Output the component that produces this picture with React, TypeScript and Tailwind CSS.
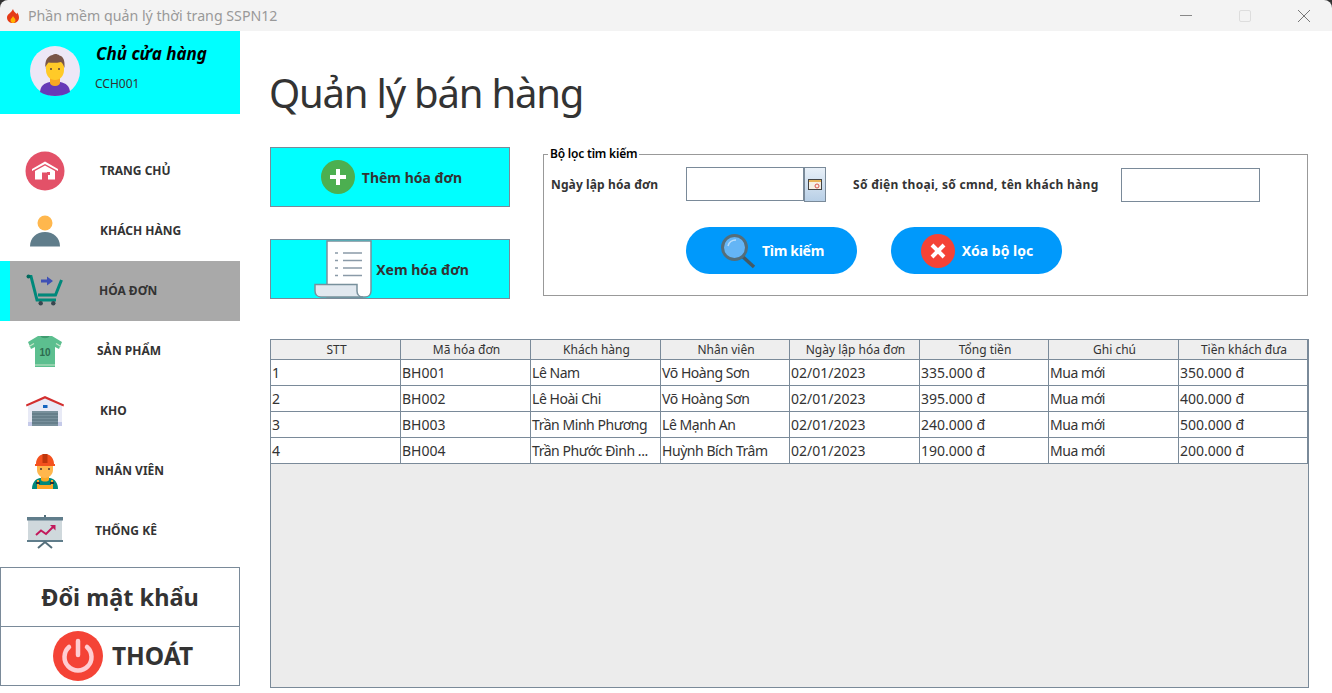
import type { ReactNode } from "react";

const FONT = "font-['Noto_Sans','DejaVu_Sans',sans-serif]";
const TABLE_COLS = "grid-cols-[130px_130px_130px_129px_130px_129px_130px_129px]";

function FlameIcon() {
  return (
    <svg width="14" height="16" viewBox="0 0 14 16">
      <path d="M7 1c.5 2.500 2 3 3.500 5 .5-.5.6-1 .6-1.500C12.500 6 13 7.700 13 9.500 13 13 10.500 15 7 15s-6-2-6-5.500C1 6 5.500 5 7 1z" fill="#e53b17" />
      <path d="M7 8c.5 1.500 2.500 2.200 2.500 4.200C9.500 13.800 8.400 15 7 15s-2.500-1.200-2.500-2.800C4.500 10.500 6.500 9.800 7 8z" fill="#ffb300" />
    </svg>
  );
}

function AvatarIcon() {
  return (
    <svg width="50" height="50" viewBox="0 0 50 50" className="mb-[3px]">
      <circle cx="25" cy="25" r="25" fill="#ede7f6" />
      <path d="M10 46c.5-6 4-9 10-10h10c6 1 9.500 4 10 10-4 2.500-9.500 4-15 4s-11-1.500-15-4z" fill="#673ab7" />
      <path d="M20 31h10v6c0 1.500-2 3-5 3s-5-1.500-5-3z" fill="#f9a825" />
      <path d="M16 17c0-5 4-7 9-7s9 3 9 8v6c0 6-4 10-9 10s-9-4-9-10z" fill="#ffca28" />
      <path d="M15.500 22c-1-7 2-12 7-13 2-1.500 5-1 7 .5 4 1 5.500 5 5 12.500-1-3-2-5-3.500-6-4 1-9 1-12.500.500-1.500 1.500-2.500 3-3.500 6z" fill="#795548" />
      <circle cx="21" cy="23" r="1" fill="#5d4037" />
      <circle cx="29" cy="23" r="1" fill="#5d4037" />
    </svg>
  );
}

function HomeIcon() {
  return (
    <svg width="40" height="40" viewBox="0 0 40 40">
      <circle cx="20" cy="20" r="19.500" fill="#e35168" />
      <path d="M7 18 20 10.500 33 18v2L20 13 7 20z" fill="#fff" />
      <path d="M10 20 20 14.500 30 20v8.500H23v-7h-6v7h-7z" fill="#fff" />
      <rect x="22" y="21" width="3" height="3" fill="#e35168" />
    </svg>
  );
}

function CustomerIcon() {
  return (
    <svg width="40" height="40" viewBox="0 0 40 40">
      <circle cx="20" cy="12" r="7.500" fill="#ffb74d" />
      <path d="M5 35.500c0-9 6.500-14.500 15-14.500s15 5.500 15 14.500z" fill="#607d8b" />
    </svg>
  );
}

function CartIcon() {
  return (
    <svg width="40" height="40" viewBox="0 0 40 40">
      <path d="M13 22h18l-1 4H14z" fill="#9e9e9e" />
      <path d="M3 5.500h3l6 23.500h19" fill="none" stroke="#00897b" strokeWidth="3" />
      <path d="M36.500 9 30.500 24H13" fill="none" stroke="#00897b" strokeWidth="3" />
      <circle cx="3.500" cy="5.500" r="2" fill="#00695c" />
      <circle cx="15.700" cy="32.300" r="2.200" fill="#37474f" />
      <circle cx="28.300" cy="32.300" r="2.200" fill="#37474f" />
      <path d="M16 8.500h6V5.500l6 4.500-6 4.500v-3h-6z" fill="#3f51b5" />
    </svg>
  );
}

function ShirtIcon() {
  return (
    <svg width="40" height="40" viewBox="0 0 40 40">
      <path d="M13 5h14l10 6-3 7-4-2v20H10V16l-4 2-3-7z" fill="#5cbf8f" />
      <path d="M15.500 5c1 3 8 3 9 0z" fill="#3f9c70" />
      <path d="M4 15.500 9 12.500M36 15.500 31 12.500" stroke="#c8e6c9" strokeWidth="1.200" />
      <rect x="10" y="33.500" width="20" height="1" fill="#c8e6c9" />
      <text x="20" y="24.500" textAnchor="middle" fontSize="10" fontWeight="700" fill="#2e6b4f" fontFamily="Liberation Sans, sans-serif">10</text>
    </svg>
  );
}

function WarehouseIcon() {
  return (
    <svg width="40" height="40" viewBox="0 0 40 40">
      <path d="M3 13 20 6l17 7v22H3z" fill="#e8eaf6" />
      <rect x="3" y="31" width="34" height="4" fill="#c5cae9" />
      <path d="M1 13.500 20 5l19 8.500-.5 2L20 7.500 1.500 15.500z" fill="#d32f2f" />
      <rect x="18" y="14" width="4.500" height="3" fill="#1565c0" />
      <rect x="7" y="20" width="26" height="15" fill="#78909c" />
      <path d="M7 23h26M7 26h26M7 29h26M7 32h26" stroke="#546e7a" strokeWidth="1" />
    </svg>
  );
}

function WorkerIcon() {
  return (
    <svg width="40" height="40" viewBox="0 0 40 40">
      <path d="M7 38c0-6 3-10 8-11h10c5 1 8 5 8 11z" fill="#00897b" />
      <path d="M16 24h8v5c-1 2-7 2-8 0z" fill="#f9a825" />
      <rect x="12" y="34" width="16" height="4" fill="#ffa726" />
      <path d="M13 29v5M27 29v5" stroke="#ffa726" strokeWidth="2" />
      <rect x="11" y="31" width="4" height="2" fill="#263238" />
      <rect x="25" y="31" width="4" height="2" fill="#263238" />
      <path d="M12 14h16v5c0 4-3.500 8-8 8s-8-4-8-8z" fill="#ffb74d" />
      <path d="M11 13c0-6 4-10 9-10s9 4 9 10h1v2H10v-2z" fill="#f4511e" />
      <rect x="17.500" y="3" width="5" height="9" fill="#bf360c" />
      <circle cx="16" cy="18" r="1" fill="#4e342e" />
      <circle cx="24" cy="18" r="1" fill="#4e342e" />
    </svg>
  );
}

function ChartIcon() {
  return (
    <svg width="40" height="40" viewBox="0 0 40 40">
      <rect x="19" y="4" width="2" height="3" fill="#546e7a" />
      <rect x="3" y="8" width="34" height="21" fill="#cfd8dc" />
      <rect x="2" y="6" width="36" height="3.500" fill="#607d8b" />
      <rect x="2" y="29" width="36" height="2" fill="#607d8b" />
      <path d="M13 37 20 31l7 6" fill="none" stroke="#546e7a" strokeWidth="2" />
      <path d="M11 24 16 19.500 21 23 29 15" fill="none" stroke="#c2185b" strokeWidth="2" />
      <path d="M25 14H30.500V19.500z" fill="#c2185b" />
    </svg>
  );
}

function PowerIcon() {
  return (
    <svg width="50" height="50" viewBox="0 0 50 50">
      <circle cx="25" cy="25" r="25" fill="#f44336" />
      <path d="M16 16a13.500 13.500 0 1 0 18 0" fill="none" stroke="#ffcdd2" strokeWidth="4.500" strokeLinecap="round" />
      <path d="M25 10v14" stroke="#ffcdd2" strokeWidth="4.500" strokeLinecap="round" />
    </svg>
  );
}

function PlusIcon() {
  return (
    <svg width="34" height="34" viewBox="0 0 34 34">
      <circle cx="17" cy="17" r="17" fill="#4caf50" />
      <path d="M17 9v16M9 17h16" stroke="#fff" strokeWidth="4" />
    </svg>
  );
}

function ReceiptIcon() {
  return (
    <svg width="58" height="58" viewBox="0 0 58 58" className="-my-px">
      <path d="M13 1h44v50c0 4-3 6-6 6H13z" fill="#fff" stroke="#78909c" strokeWidth="1.500" />
      <path d="M1 44.500h42V51c0 3 2 6 6 6H7c-4 0-6-3-6-6z" fill="#e1e8ef" stroke="#78909c" strokeWidth="1.500" />
      <path d="M21 13h3M29 13h19M21 20.500h3M29 20.500h19M21 28h3M29 28h19M21 35.500h3M29 35.500h19" stroke="#8a9aa8" strokeWidth="1.300" />
    </svg>
  );
}

function SearchIcon() {
  return (
    <svg width="36" height="36" viewBox="0 0 36 36">
      <path d="M22 23 34 34" stroke="#455a64" strokeWidth="3.500" />
      <circle cx="14.500" cy="14.500" r="12" fill="#64b5f6" stroke="#546e7a" strokeWidth="3" />
      <path d="M8 13c1-4 4-6 8-6" fill="none" stroke="#bbdefb" strokeWidth="1.500" />
    </svg>
  );
}

function CrossIcon() {
  return (
    <svg width="34" height="34" viewBox="0 0 34 34">
      <circle cx="17" cy="17" r="17" fill="#f44336" />
      <path d="M11 11 23 23M23 11 11 23" stroke="#fff" strokeWidth="4" />
    </svg>
  );
}

function CalendarIcon() {
  return (
    <svg width="14" height="12" viewBox="0 0 14 12">
      <rect x="0.500" y="0.500" width="13" height="10" fill="#f5f0e6" stroke="#444" />
      <rect x="1" y="1" width="12" height="2" fill="#e8b45a" />
      <circle cx="9" cy="7" r="2" fill="none" stroke="#d9534f" />
    </svg>
  );
}

type NavItem = {
  label: string;
  icon: ReactNode;
  labelClass: string;
  active?: boolean;
};

const navItems: NavItem[] = [
  { label: "TRANG CHỦ", icon: <HomeIcon />, labelClass: "ml-[35px]" },
  { label: "KHÁCH HÀNG", icon: <CustomerIcon />, labelClass: "ml-[35px]" },
  { label: "HÓA ĐƠN", icon: <CartIcon />, labelClass: "ml-[34px]", active: true },
  { label: "SẢN PHẨM", icon: <ShirtIcon />, labelClass: "ml-[32px]" },
  { label: "KHO", icon: <WarehouseIcon />, labelClass: "ml-[35px]" },
  { label: "NHÂN VIÊN", icon: <WorkerIcon />, labelClass: "ml-[30px]" },
  { label: "THỐNG KÊ", icon: <ChartIcon />, labelClass: "ml-[30px]" },
];

const columns = ["STT", "Mã hóa đơn", "Khách hàng", "Nhân viên", "Ngày lập hóa đơn", "Tổng tiền", "Ghi chú", "Tiền khách đưa"];

const invoices = [
  ["1", "BH001", "Lê Nam", "Võ Hoàng Sơn", "02/01/2023", "335.000 đ", "Mua mới", "350.000 đ"],
  ["2", "BH002", "Lê Hoài Chi", "Võ Hoàng Sơn", "02/01/2023", "395.000 đ", "Mua mới", "400.000 đ"],
  ["3", "BH003", "Trần Minh Phương", "Lê Mạnh An", "02/01/2023", "240.000 đ", "Mua mới", "500.000 đ"],
  ["4", "BH004", "Trần Phước Đình ...", "Huỳnh Bích Trâm", "02/01/2023", "190.000 đ", "Mua mới", "200.000 đ"],
];

// name and note columns run narrower than the digits in the original font
const narrowCols = [2, 3, 6];

export default function App() {
  return (
    <div className={`flex h-[693px] w-[1332px] flex-col overflow-hidden bg-[#333] ${FONT}`}>
      {/* Title bar */}
      <div className="flex h-[31px] shrink-0 items-center rounded-t-[8px] bg-[#f3f3f3] pl-[6px]">
        <FlameIcon />
        <span className="ml-[8px] text-[14.2px] text-[#999]">Phần mềm quản lý thời trang SSPN12</span>
        <div className="ml-auto flex items-center">
          <div className="h-px w-[12px] bg-[#888]" />
          <div className="ml-[47px] h-[12px] w-[12px] rounded-[2px] border border-[#ddd]" />
          <svg width="14" height="14" viewBox="0 0 14 14" className="ml-[46px] mr-[21px]">
            <path d="M1 1 13 13M13 1 1 13" stroke="#777" strokeWidth="1" />
          </svg>
        </div>
      </div>

      <div className="flex flex-1 bg-white">
        {/* Sidebar */}
        <aside className="flex w-[240px] shrink-0 flex-col">
          <div className="flex h-[83px] items-center bg-[#00ffff] pl-[30px]">
            <AvatarIcon />
            <div className="ml-[16px] flex flex-col self-start pt-[11px]">
              <span className="text-[17px] font-bold italic leading-[24px] text-black">Chủ cửa hàng</span>
              <span className="mt-[10px] -ml-px text-[12px] leading-[16px] text-[#333]">CCH001</span>
            </div>
          </div>
          <nav className="mt-[27px] flex flex-col">
            {navItems.map((item) => (
              <div
                key={item.label}
                className={item.active ? "flex h-[60px] items-center border-l-[10px] border-[#00ffff] bg-[#a9a9a9] pl-[15px]" : "flex h-[60px] items-center pl-[25px]"}
              >
                {item.icon}
                <span className={`text-[12px] font-bold text-[#333] ${item.labelClass}`}>{item.label}</span>
              </div>
            ))}
          </nav>
          <div className="mt-[6px] flex h-[60px] items-center justify-center border border-[#7a8a99] pt-[2px] text-[23.5px] font-bold text-[#333]">
            Đổi mật khẩu
          </div>
          <div className="-mt-px flex h-[60px] items-center justify-center gap-[9px] border border-[#7a8a99] pl-[6px] text-[24.5px] font-bold text-[#333]">
            <PowerIcon />
            THOÁT
          </div>
        </aside>

        {/* Main content */}
        <main className="flex min-w-0 flex-1 flex-col pl-[30px]">
          <h1 className="-ml-px h-[116px] pt-[33px] text-[40px] leading-[58px] tracking-[-1.2px] text-[#333]">Quản lý bán hàng</h1>

          <div className="flex h-[152px] items-start">
            <div className="flex w-[240px] flex-col gap-[32px]">
              <button className="flex h-[60px] items-center justify-center gap-[7px] border border-[#7a8a99] bg-[#00ffff] pl-[3px] text-[14px] font-bold text-[#333]">
                <PlusIcon />
                Thêm hóa đơn
              </button>
              <button className="flex h-[60px] items-center justify-center gap-[4px] border border-[#7a8a99] bg-[#00ffff] pl-[3px] text-[14px] font-bold text-[#333]">
                <ReceiptIcon />
                Xem hóa đơn
              </button>
            </div>

            <fieldset className="ml-[33px] h-[149px] w-[765px] border border-[#999] pl-[7px]">
              <legend className="-ml-[3px] px-[2px] text-[12px] font-semibold leading-[14px] tracking-[-0.2px] text-black">Bộ lọc tìm kiếm</legend>
              <div className="mt-[6px] flex items-center text-[12px] font-bold text-[#333]">
                <span className="w-[135px] tracking-[0.12px]">Ngày lập hóa đơn</span>
                <div className="h-[34px] w-[118px] self-start border border-[#7a8a99] bg-white" />
                <button className="flex h-[35px] w-[22px] items-center justify-center border border-[#7a8a99] bg-gradient-to-b from-[#e8f0f8] to-[#b8cfe6]">
                  <CalendarIcon />
                </button>
                <span className="ml-[27px] w-[268px] tracking-[0.3px]">Số điện thoại, số cmnd, tên khách hàng</span>
                <div className="h-[34px] w-[139px] self-end border border-[#7a8a99] bg-white" />
              </div>
              <div className="ml-[135px] mt-[25px] flex gap-[34px]">
                <button className="flex h-[47px] w-[171px] items-center justify-center gap-[6px] rounded-full bg-[#0099fb] pl-[1px] text-[14px] font-bold tracking-[-0.3px] text-white">
                  <SearchIcon />
                  Tìm kiếm
                </button>
                <button className="flex h-[47px] w-[171px] items-center justify-center gap-[7px] rounded-full bg-[#0099fb] pl-[1px] text-[14px] font-bold text-white">
                  <CrossIcon />
                  Xóa bộ lọc
                </button>
              </div>
            </fieldset>
          </div>

          {/* Invoice table */}
          <div className="mt-[40px] h-[349px] w-[1039px] border border-[#7a8a99] bg-[#ececec]">
            <div className={`grid w-[1037px] border-b border-[#7a8a99] bg-[#eeeeee] ${TABLE_COLS}`}>
              {columns.map((col) => (
                <div key={col} className="h-[19px] border-r border-[#7a8a99] pl-[2px] text-center text-[12px] leading-[20px] text-[#333]">
                  {col}
                </div>
              ))}
            </div>
            {invoices.map((row) => (
              <div key={row[0]} className={`grid w-[1037px] border-b border-[#7a8a99] bg-white ${TABLE_COLS}`}>
                {row.map((cell, i) => (
                  <div
                    key={i}
                    className={`h-[25px] overflow-hidden whitespace-nowrap border-r border-[#7a8a99] pl-[1px] text-[14px] leading-[25px] text-[#333] ${narrowCols.includes(i) ? "tracking-[-0.45px]" : ""}`}
                  >
                    {cell}
                  </div>
                ))}
              </div>
            ))}
          </div>
        </main>
      </div>
    </div>
  );
}
